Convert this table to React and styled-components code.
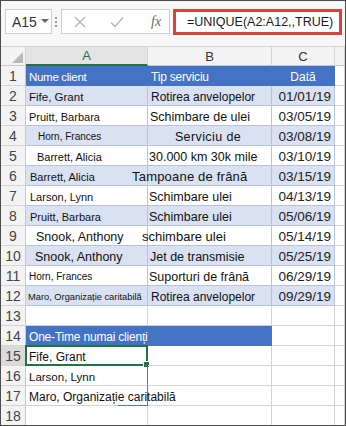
import React from "react";
import styled, { createGlobalStyle, css } from "styled-components";

const Global = createGlobalStyle`
  body {
    margin: 0;
    background: #ffffff;
  }
`;

const Frame = styled.div`
  width: 346px;
  height: 426px;
  box-sizing: border-box;
  border: 1px solid #4d4d4d;
  overflow: hidden;
  background: #ffffff;
  font-family: "Liberation Sans", Arial, sans-serif;
  color: #111;
`;

const Toolbar = styled.div`
  height: 45px;
  box-sizing: border-box;
  display: flex;
  align-items: flex-start;
  padding: 8px 0 0 4px;
  background: #f7f7f7;
`;

const NameBox = styled.div`
  width: 47px;
  height: 25px;
  box-sizing: border-box;
  border: 1px solid #cfcfcf;
  background: #fff;
  display: flex;
  align-items: center;
  gap: 4px;
  padding-left: 6px;
  font-size: 14px;
  color: #333;
`;

const Caret = styled.span`
  width: 0;
  height: 0;
  border-left: 4px solid transparent;
  border-right: 4px solid transparent;
  border-top: 4px solid #666;
  margin-top: -2px;
`;

const Dots = styled.div`
  width: 6px;
  height: 25px;
  margin: 0 2px 0 1px;
  display: flex;
  flex-direction: column;
  align-items: center;
  justify-content: center;
  gap: 2px;

  span {
    width: 2px;
    height: 2px;
    background: #9a9a9a;
  }
`;

const FuncBox = styled.div`
  width: 109px;
  height: 25px;
  box-sizing: border-box;
  border: 1px solid #cfcfcf;
  background: #fff;
  display: flex;
  align-items: center;
  padding-left: 12px;
  gap: 24px;
`;

const Fx = styled.span`
  font-family: "Liberation Serif", "Times New Roman", serif;
  font-style: italic;
  font-size: 14px;
  color: #6a6a6a;
  margin-left: 3px;
`;

const FormulaBox = styled.div`
  width: 169px;
  height: 26px;
  margin-left: 3px;
  box-sizing: border-box;
  border: 3px solid #d9433d;
  background: #fff;
  display: flex;
  align-items: center;
  padding-left: 11px;
  font-size: 12.5px;
  color: #1a1a1a;
  white-space: nowrap;
`;

const Sheet = styled.div`
  display: grid;
  grid-template-columns: 25px 122px 124px 63px 1fr;
  grid-auto-rows: 20px;
`;

const Corner = styled.div`
  box-sizing: border-box;
  background: #f3f3f3;
  border-right: 1px solid #d4d4d4;
  border-bottom: 1px solid #c8c8c8;
  border-top: 1px solid #d4d4d4;
  display: flex;
  align-items: flex-end;
  justify-content: flex-end;
  padding: 0 2px 2px 0;
`;

const ColHead = styled.div`
  box-sizing: border-box;
  background: ${(p) => (p.$active ? "#e3e3e3" : "#f3f3f3")};
  border-top: 1px solid #d4d4d4;
  border-right: 1px solid #d4d4d4;
  border-bottom: ${(p) => (p.$active ? "2px solid #217346" : "1px solid #c8c8c8")};
  display: flex;
  align-items: center;
  justify-content: center;
  font-size: 13px;
  color: ${(p) => (p.$active ? "#217346" : "#333")};
`;

const RowHead = styled.div`
  box-sizing: border-box;
  background: ${(p) => (p.$active ? "#dadada" : "#f3f3f3")};
  border-right: 1px solid #c8c8c8;
  border-bottom: 1px solid #d4d4d4;
  display: flex;
  align-items: center;
  justify-content: center;
  font-size: 14px;
  color: #444;
`;

const Cell = styled.div`
  position: relative;
  box-sizing: border-box;
  background: ${(p) => p.$bg || "transparent"};
  border-right: 1px solid ${(p) => p.$line || "#d4d4d4"};
  border-bottom: 1px solid ${(p) => p.$line || "#d4d4d4"};
  display: flex;
  align-items: center;
  justify-content: ${(p) =>
    p.$align === "right" ? "flex-end" : p.$align === "center" ? "center" : "flex-start"};
  padding: 2px ${(p) => p.$padR ?? 3}px 0 ${(p) => p.$pad ?? 3}px;
  font-size: ${(p) => p.$size || 12}px;
  letter-spacing: ${(p) => p.$track || 0}px;
  color: ${(p) => p.$color || "#111"};
  white-space: nowrap;
  overflow: visible;
  z-index: ${(p) => (p.$over ? 1 : 0)};

  ${(p) =>
    p.$spill &&
    css`
      border-right-color: #4a78c8;
    `}

  ${(p) =>
    p.$spillEnd &&
    css`
      &::after {
        content: "";
        position: absolute;
        right: -1px;
        bottom: -1px;
        width: 30px;
        height: 1px;
        background: #4a78c8;
      }
    `}

  ${(p) =>
    p.$selected &&
    css`
      &::after {
        content: "";
        position: absolute;
        left: -1px;
        top: -1px;
        right: -1px;
        bottom: -1px;
        border: 2px solid #217346;
      }
      &::before {
        content: "";
        position: absolute;
        right: -3px;
        bottom: -3px;
        width: 5px;
        height: 5px;
        background: #217346;
        border: 1px solid #fff;
        z-index: 2;
      }
    `}
`;

const Shift = styled.span`
  margin-left: ${(p) => p.$by}px;
`;

const BLUE = "#4472c4";
const BAND = "#d9e1f2";
const TLINE = "#b4c3de";

const rows = [
  { a: "Fife, Grant", as: 11.5, ap: 3, b: "Rotirea anvelopelor", bs: 12, bp: 3, d: "01/01/19" },
  { a: "Pruitt, Barbara", as: 11, ap: 3, b: "Schimbare de ulei", bs: 12.5, bp: 2, d: "03/05/19" },
  { a: "Horn, Frances", as: 10, ap: 12, b: "Serviciu de", bs: 12.5, bt: 0.4, center: true, d: "03/08/19" },
  { a: "Barrett, Alicia", as: 11, ap: 11, b: "30.000 km 30k mile", bs: 12.5, bp: 1, d: "03/10/19" },
  { a: "Barrett, Alicia", as: 11, ap: 4, b: "Tampoane de frână", bs: 13, bt: 0.2, shift: -16, d: "03/15/19" },
  { a: "Larson, Lynn", as: 11, ap: 4, b: "Schimbare ulei", bs: 12.5, bp: 1, d: "04/13/19" },
  { a: "Pruitt, Barbara", as: 11, ap: 4, b: "Schimbare ulei", bs: 12.5, bp: 1, d: "05/06/19" },
  { a: "Snook, Anthony", as: 12.5, ap: 10, b: "schimbare ulei", bs: 13, shift: -6, d: "05/14/19" },
  { a: "Snook, Anthony", as: 12.5, ap: 9, b: "Jet de transmisie", bs: 12.5, bp: 2, d: "05/25/19" },
  { a: "Horn, Frances", as: 10, ap: 3, b: "Suporturi de frână", bs: 12.5, bp: 1, d: "06/29/19" },
  { a: "Maro, Organizație caritabilă", as: 9.3, ap: 2, b: "Rotirea anvelopelor", bs: 12, bp: 3, d: "09/29/19" },
];

const XIcon = () => (
  <svg width="12" height="12" viewBox="0 0 12 12">
    <path d="M1 1 L11 11 M11 1 L1 11" stroke="#b3b3b3" strokeWidth="1.4" fill="none" />
  </svg>
);

const CheckIcon = () => (
  <svg width="14" height="12" viewBox="0 0 14 12">
    <path d="M1 6.5 L5 10.5 L13 1.5" stroke="#b3b3b3" strokeWidth="1.4" fill="none" />
  </svg>
);

const CornerMark = () => (
  <svg width="11" height="11" viewBox="0 0 11 11">
    <path d="M11 0 L11 11 L0 11 Z" fill="#b9b9b9" />
  </svg>
);

const Empty = ({ n, active }) => (
  <>
    <RowHead $active={active}>{n}</RowHead>
    <Cell />
    <Cell />
    <Cell />
    <Cell />
  </>
);

export default function App() {
  return (
    <Frame>
      <Global />
      <Toolbar>
        <NameBox>
          A15
          <Caret />
        </NameBox>
        <Dots>
          <span />
          <span />
          <span />
        </Dots>
        <FuncBox>
          <XIcon />
          <CheckIcon />
          <Fx>fx</Fx>
        </FuncBox>
        <FormulaBox>=UNIQUE(A2:A12,,TRUE)</FormulaBox>
      </Toolbar>

      <Sheet>
        <Corner>
          <CornerMark />
        </Corner>
        <ColHead $active>A</ColHead>
        <ColHead>B</ColHead>
        <ColHead>C</ColHead>
        <ColHead />

        <RowHead>1</RowHead>
        <Cell $bg={BLUE} $line={BLUE} $color="#fff" $size={11.5} $track={-0.3}>
          Nume client
        </Cell>
        <Cell $bg={BLUE} $line={BLUE} $color="#fff" $size={12} $track={-0.2}>
          Tip serviciu
        </Cell>
        <Cell $bg={BLUE} $line={BLUE} $color="#fff" $size={12} $align="center">
          Dată
        </Cell>
        <Cell />

        {rows.map((r, i) => {
          const bg = i % 2 === 0 ? BAND : "#ffffff";
          return (
            <React.Fragment key={i}>
              <RowHead>{i + 2}</RowHead>
              <Cell $bg={bg} $line={TLINE} $size={r.as} $pad={r.ap}>
                {r.a}
              </Cell>
              <Cell
                $bg={bg}
                $line={TLINE}
                $size={r.bs}
                $track={r.bt}
                $pad={r.bp ?? 0}
                $align={r.center ? "center" : "left"}
                $over={!!r.shift}
              >
                {r.shift ? <Shift $by={r.shift}>{r.b}</Shift> : r.b}
              </Cell>
              <Cell $bg={bg} $line={TLINE} $size={13.5} $align="right" $padR={3} $color="#222">
                {r.d}
              </Cell>
              <Cell />
            </React.Fragment>
          );
        })}

        <Empty n={13} />

        <RowHead>14</RowHead>
        <Cell $bg={BLUE} $line={BLUE} $color="#fff" $size={12} $track={-0.2}>
          One-Time numai clienți
        </Cell>
        <Cell $bg={BLUE} $line={BLUE} />
        <Cell />
        <Cell />

        <RowHead $active>15</RowHead>
        <Cell $size={12} $selected $spill>
          Fife, Grant
        </Cell>
        <Cell />
        <Cell />
        <Cell />

        <RowHead>16</RowHead>
        <Cell $size={11.5} $spill>
          Larson, Lynn
        </Cell>
        <Cell />
        <Cell />
        <Cell />

        <RowHead>17</RowHead>
        <Cell $size={12} $spill $spillEnd $over>
          Maro, Organizație caritabilă
        </Cell>
        <Cell />
        <Cell />
        <Cell />

        <Empty n={18} />
      </Sheet>
    </Frame>
  );
}
